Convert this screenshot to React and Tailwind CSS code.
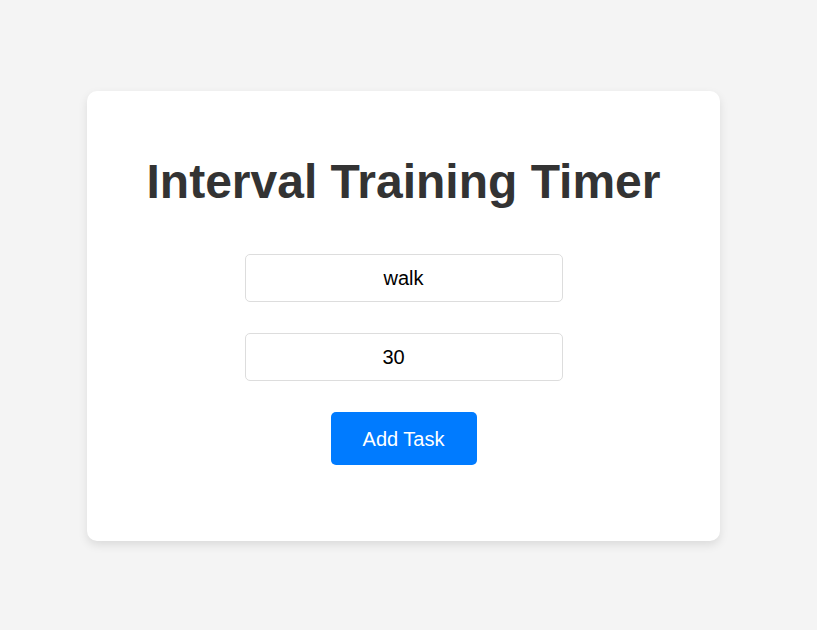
import React, { useState } from 'react';

const App = () => {
  const [taskName, setTaskName] = useState('walk');
  const [duration, setDuration] = useState('30');

  return (
    <div
      className="min-h-[630px] w-full bg-[#f4f4f4] flex items-start justify-center pt-[91px] pr-[10px]"
      style={{ fontFamily: '"Liberation Sans", Arial, sans-serif' }}
    >
      <div className="w-[633px] bg-white rounded-[10px] shadow-[0_4px_10px_rgba(0,0,0,0.1)] pt-[63px] pb-[76px] flex flex-col items-center">
        <h1 className="text-[48px] leading-[55px] font-bold text-[#333] mb-[45px]">
          Interval Training Timer
        </h1>

        {/* Task inputs */}
        <input
          type="text"
          value={taskName}
          onChange={(e) => setTaskName(e.target.value)}
          className="w-[318px] h-[48px] border border-[#ddd] rounded-[5px] text-center text-[20px] text-black outline-none mb-[31px]"
        />
        <input
          type="number"
          value={duration}
          onChange={(e) => setDuration(e.target.value)}
          className="w-[318px] h-[48px] border border-[#ddd] rounded-[5px] text-center text-[20px] text-black outline-none mb-[31px] pr-[5px]"
        />

        <button className="w-[146px] h-[53px] bg-[#007bff] text-white text-[20px] rounded-[5px]">
          Add Task
        </button>
      </div>
    </div>
  );
};

export default App;
